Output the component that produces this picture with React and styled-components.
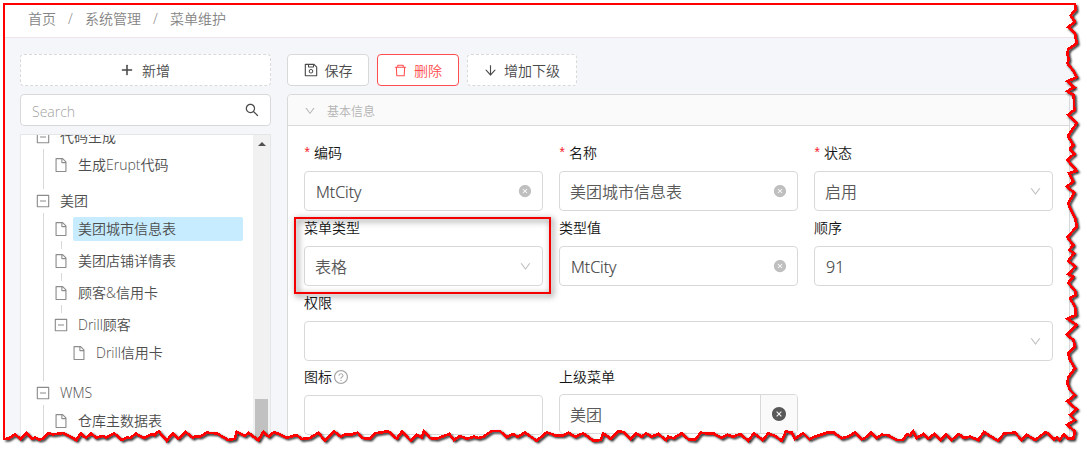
import React from "react";
import styled, { createGlobalStyle, css } from "styled-components";
import {
  AiFillCloseCircle,
  AiOutlineArrowDown,
  AiOutlineDelete,
  AiOutlineDown,
  AiOutlineFile,
  AiOutlineMinusSquare,
  AiOutlinePlus,
  AiOutlineQuestionCircle,
  AiOutlineSave,
  AiOutlineSearch,
} from "react-icons/ai";

const GlobalStyle = createGlobalStyle`
  * { box-sizing: border-box; }
  body {
    margin: 0;
    background: #fff;
    overflow: hidden;
    font-family: "Open Sans", "Noto Sans CJK SC", sans-serif;
    font-size: 14px;
    font-weight: 350;
    color: #4d4d4d;
  }
  svg { display: block; flex: none; }
`;

const Page = styled.div`
  position: relative;
  width: 1087px;
  height: 451px;
  padding: 4px 0 0 4px;
  overflow: hidden;
  display: flex;
  flex-direction: column;
`;

const Breadcrumb = styled.nav`
  flex: none;
  height: 34px;
  padding: 0 0 5px 24px;
  border-bottom: 1px solid #ece4ea;
  display: flex;
  align-items: center;
  color: #858585;
`;

const Slash = styled.span`
  width: 29px;
  text-align: center;
`;

const Main = styled.main`
  flex: 1;
  min-height: 0;
  padding: 16px 0 0 16px;
  background: #f5f6fa;
  display: flex;
  gap: 16px;
`;

const Sidebar = styled.aside`
  width: 251px;
  display: flex;
  flex-direction: column;
  gap: 8px;
`;

const Content = styled.section`
  width: 783px;
  display: flex;
  flex-direction: column;
  gap: 8px;
`;

const Toolbar = styled.div`
  display: flex;
  gap: 8px;
`;

const Button = styled.button`
  flex: none;
  height: 32px;
  width: ${(p) => p.$width || "100%"};
  padding: 1px 1px 0 0;
  border: 1px ${(p) => (p.$dashed ? "dashed" : "solid")} ${(p) => (p.$danger ? "#ff4d4f" : "#d9d9d9")};
  border-radius: 4px;
  background: #fff;
  color: ${(p) => (p.$danger ? "#ff4d4f" : "#4a4a4a")};
  font: inherit;
  line-height: 20px;
  display: flex;
  align-items: center;
  justify-content: center;
  gap: ${(p) => p.$gap || 6}px;

  svg {
    margin-top: -1px;
    stroke: currentColor;
    stroke-width: ${(p) => p.$iconStroke || 0};
  }
`;

const SearchBox = styled.div`
  flex: none;
  height: 32px;
  padding: 0 10px 0 11px;
  border: 1px solid #d9d9d9;
  border-radius: 4px;
  background: #fff;
  display: flex;
  align-items: center;
  justify-content: space-between;
  color: #a2a2a2;

  span { padding-top: 2px; }
  svg { color: #4a4a4a; }
`;

const TreePanel = styled.div`
  flex: 1;
  min-height: 0;
  border: 1px solid #e4e6e8;
  background: #fff;
  display: flex;
  overflow: hidden;
`;

const Tree = styled.div`
  flex: 1;
  margin-top: -10px;
`;

const Branch = styled.div`
  margin-left: ${(p) => (p.$nested ? "18px" : "22px")};
  padding: 4px 0 ${(p) => p.$bottom || 0}px 0;
  ${(p) =>
    !p.$nested &&
    css`
      border-left: 1px solid #d9d9d9;
    `}
`;

const TreeRow = styled.div`
  height: 24px;
  padding-left: ${(p) => (p.$root ? "14px" : "9px")};
  display: flex;
  align-items: center;
  gap: 4px;

  svg { color: #8c8c8c; }
`;

const TreeLabel = styled.span`
  height: 24px;
  padding: 0 5px;
  line-height: 24px;
  border-radius: 2px;
  ${(p) =>
    p.$selected &&
    css`
      width: 170px;
      background: #c7ecff;
    `}
`;

const Connector = styled.div`
  width: 1px;
  height: 8px;
  margin-left: 17px;
  background: #d9d9d9;
`;

const ScrollTrack = styled.div`
  width: 17px;
  background: #f1f1f1;
  display: flex;
  flex-direction: column;
  align-items: center;
`;

const ScrollArrow = styled.div`
  margin-top: 7px;
  border: solid transparent;
  border-width: 0 4px 4px;
  border-bottom-color: #505050;
`;

const ScrollThumb = styled.div`
  width: 13px;
  height: 60px;
  margin-top: 253px;
  background: #c1c1c1;
`;

const Card = styled.div`
  flex: 1;
  border: 1px solid #d9d9d9;
  border-radius: 4px 4px 0 0;
  background: #fff;
`;

const CardHeader = styled.div`
  height: 31px;
  padding: 1px 0 0 16px;
  border-bottom: 1px solid #d9d9d9;
  border-radius: 4px 4px 0 0;
  background: #fafafa;
  display: flex;
  align-items: center;
  gap: 11px;
  font-size: 12px;
  color: #b3b3b3;
`;

const Form = styled.div`
  padding: 10px 16px 0;
  display: grid;
  grid-template-columns: repeat(3, 239px);
  column-gap: 16px;
`;

const Field = styled.div`
  grid-column: ${(p) => (p.$wide ? "1 / -1" : "auto")};
`;

const Label = styled.label`
  height: ${(p) => p.$height || 35}px;
  padding-bottom: ${(p) => (p.$height === 34 ? 4 : 3)}px;
  display: flex;
  align-items: center;
  gap: 1px;
  color: #141414;

  svg {
    color: #a6a6a6;
    margin-top: 1px;
  }
`;

const Required = styled.span`
  width: 9px;
  height: 14px;
  margin-left: -1px;
  margin-right: 1px;
  line-height: 18px;
  font-family: "Liberation Mono", monospace;
  font-size: 14px;
  font-weight: 400;
  color: #f5222d;
`;

const Control = styled.div`
  height: 40px;
  padding-left: 11px;
  border: 1px solid #d9d9d9;
  border-radius: 4px;
  display: flex;
  align-items: center;
  font-size: 16px;
  color: #595959;
  overflow: hidden;
`;

const Value = styled.span`
  flex: 1;
  ${(p) =>
    p.$latin
      ? css`
          padding-top: 2px;
          color: #404040;
          -webkit-text-stroke: 0.2px #404040;
        `
      : css`
          margin-left: -1px;
        `}
`;

const Suffix = styled.span`
  padding-right: 10px;
  color: #bfbfbf;
`;

const Addon = styled.span`
  width: 37px;
  height: 100%;
  border-left: 1px solid #d9d9d9;
  background: #fafafa;
  display: flex;
  align-items: center;
  justify-content: center;
`;

const Highlight = styled.div`
  position: absolute;
  left: 294px;
  top: 217px;
  width: 257px;
  height: 77px;
  border: 2px solid #f40000;
  filter: drop-shadow(2px 2px 3px rgba(0, 0, 0, 0.65));
`;

const Overlay = styled.svg`
  position: absolute;
  left: 0;
  top: 0;
`;

const zigzag = (ox, oy, list) => {
  const n = list.split(/[ ,]+/).map(Number);
  const out = [];
  for (let i = 0; i < n.length; i += 2) {
    out.push(`${(ox + n[i] / 3).toFixed(1)},${(oy + n[i + 1] / 3).toFixed(1)}`);
  }
  return out;
};

const rightEdge = [
  ...zigzag(1040, 0, "105,12 107,30 92,46 104,65 85,82 105,100 110,130 85,148 82,160 86,180 82,190 98,210 110,232 82,244 103,262 82,274 101,285 103,330 84,345 110,370 84,408 100,435 90,447 103,462 82,480 110,512 88,520 100,545 80,560 103,578 85,610 90,625 105,655"),
  ...zigzag(810, 130, "795,260 800,290 772,322 790,345 778,360 792,370 775,392 796,410 775,432 790,440 775,458 792,480"),
  ...zigzag(820, 290, "765,0 768,15 750,25 765,50 768,75 742,86 770,105 740,133 760,150 765,170 745,190 750,210 765,235 745,262 742,280 750,300 765,315 742,334 770,358 750,375 765,390 742,404 765,425 760,446"),
];

const bottomEdge = [
  ...zigzag(0, 290, "12,447 25,446 45,433 62,448 80,429 95,446 105,443 118,449 128,446 145,430 160,433 190,429 212,441 229,450 243,430 258,444 273,430 288,443 308,438 318,443 342,430 366,450 380,443 390,444 408,431 432,444 455,432 463,436 476,424 500,452 519,430 535,446 557,426 578,443 590,438 600,440 620,428 650,430 685,450 705,446 710,426 735,438 745,428 775,451 790,426 806,440 822,426 838,433"),
  ...zigzag(280, 210, "20,683 50,675 65,687 90,684 115,668 135,692 162,664 182,680 195,673 212,674 233,668 248,684 270,686 285,670 325,664 350,686 366,665 392,692 410,674 425,682 432,664 450,684 470,686 492,678 508,672 522,690 540,678 560,686 582,680 595,684 610,680 635,663 660,663 680,682 700,672 712,680 735,668 770,692"),
  ...zigzag(540, 290, "20,427 45,436 70,436 85,428 105,440 130,430 160,452 182,450 190,430 212,446 235,424 250,426 272,448 288,430 305,440 318,430 335,440 355,432 378,450 385,440 400,445 425,430 445,448 465,450 482,428 500,430 520,430 545,444 562,434 580,440 600,432 625,452 642,430 668,450 685,430 705,438 725,452 738,424 755,428 765,446 790,430 808,448 830,438"),
  ...zigzag(820, 290, "25,427 40,427 65,445 82,440 105,428 125,448 135,444 153,428 170,444 185,434 205,436 230,450 248,450 262,432 270,436 279,424 290,444 310,432 325,446 343,432 362,450 378,432 395,450 417,432 430,444 450,440 475,450 492,426 510,438 535,452 553,430 585,428 605,450 620,434 645,450 678,426 702,448 712,442 718,450 732,434 745,446"),
];

const outline = `M4,4 L${rightEdge.join(" ")} ${bottomEdge.slice().reverse().join(" ")} Z`;
const tornEdges = `M${rightEdge.join(" ")} ${bottomEdge.slice().reverse().join(" ")}`;

function TornFrame() {
  return (
    <Overlay width="1087" height="451">
      <defs>
        <filter id="soft" x="-5%" y="-5%" width="110%" height="110%">
          <feGaussianBlur stdDeviation="0.8" />
        </filter>
      </defs>
      <path d={`M0,0 H1087 V451 H0 Z ${outline}`} fill="#fff" fillRule="evenodd" />
      <path d={tornEdges} transform="translate(1.5 1.5)" fill="none" stroke="#000" strokeWidth="2.2" filter="url(#soft)" />
      <path d={outline} fill="none" stroke="#f00" strokeWidth="2" shapeRendering="crispEdges" />
      <path d={tornEdges} fill="none" stroke="#f00" strokeWidth="2.7" shapeRendering="crispEdges" />
    </Overlay>
  );
}

function Leaf({ children, selected }) {
  return (
    <TreeRow>
      <AiOutlineFile size={16} />
      <TreeLabel $selected={selected}>{children}</TreeLabel>
    </TreeRow>
  );
}

function Parent({ children, root }) {
  return (
    <TreeRow $root={root}>
      <AiOutlineMinusSquare size={16} />
      <TreeLabel>{children}</TreeLabel>
    </TreeRow>
  );
}

function FormField({ label, required, help, labelHeight, value, latin, suffix, addon, wide }) {
  return (
    <Field $wide={wide}>
      <Label $height={labelHeight}>
        {required && <Required>*</Required>}
        {label}
        {help && <AiOutlineQuestionCircle size={16} />}
      </Label>
      <Control>
        <Value $latin={latin}>{value}</Value>
        {suffix === "clear" && <Suffix><AiFillCloseCircle size={14} /></Suffix>}
        {suffix === "select" && <Suffix><AiOutlineDown size={13} /></Suffix>}
        {addon && <Addon><AiFillCloseCircle size={16} /></Addon>}
      </Control>
    </Field>
  );
}

export default function App() {
  return (
    <Page>
      <GlobalStyle />
      <Breadcrumb>
        首页<Slash>/</Slash>系统管理<Slash>/</Slash>菜单维护
      </Breadcrumb>
      <Main>
        <Sidebar>
          <Button $dashed $iconStroke={40} $gap={8}><AiOutlinePlus size={14} />新增</Button>
          <SearchBox><span>Search</span><AiOutlineSearch size={16} /></SearchBox>
          <TreePanel>
            <Tree>
              <Parent root>代码生成</Parent>
              <Branch $bottom={12}>
                <Leaf>生成Erupt代码</Leaf>
              </Branch>
              <Parent root>美团</Parent>
              <Branch $bottom={16}>
                <Leaf selected>美团城市信息表</Leaf>
                <Connector />
                <Leaf>美团店铺详情表</Leaf>
                <Connector />
                <Leaf>顾客&amp;信用卡</Leaf>
                <Connector />
                <Parent>Drill顾客</Parent>
                <Branch $nested>
                  <Leaf>Drill信用卡</Leaf>
                </Branch>
              </Branch>
              <Parent root>WMS</Parent>
              <Branch $bottom={20}>
                <Leaf>仓库主数据表</Leaf>
              </Branch>
            </Tree>
            <ScrollTrack>
              <ScrollArrow />
              <ScrollThumb />
            </ScrollTrack>
          </TreePanel>
        </Sidebar>
        <Content>
          <Toolbar>
            <Button $width="82px"><AiOutlineSave size={16} />保存</Button>
            <Button $width="82px" $danger><AiOutlineDelete size={15} />删除</Button>
            <Button $width="110px" $dashed><AiOutlineArrowDown size={15} />增加下级</Button>
          </Toolbar>
          <Card>
            <CardHeader><AiOutlineDown size={12} />基本信息</CardHeader>
            <Form>
              <FormField label="编码" required value="MtCity" latin suffix="clear" />
              <FormField label="名称" required value="美团城市信息表" suffix="clear" />
              <FormField label="状态" required value="启用" suffix="select" />
              <FormField label="菜单类型" value="表格" suffix="select" />
              <FormField label="类型值" value="MtCity" latin suffix="clear" />
              <FormField label="顺序" value="91" latin />
              <FormField label="权限" wide suffix="select" />
              <FormField label="图标" help labelHeight={34} />
              <FormField label="上级菜单" labelHeight={33} value="美团" addon />
            </Form>
          </Card>
        </Content>
      </Main>
      <Highlight />
      <TornFrame />
    </Page>
  );
}
